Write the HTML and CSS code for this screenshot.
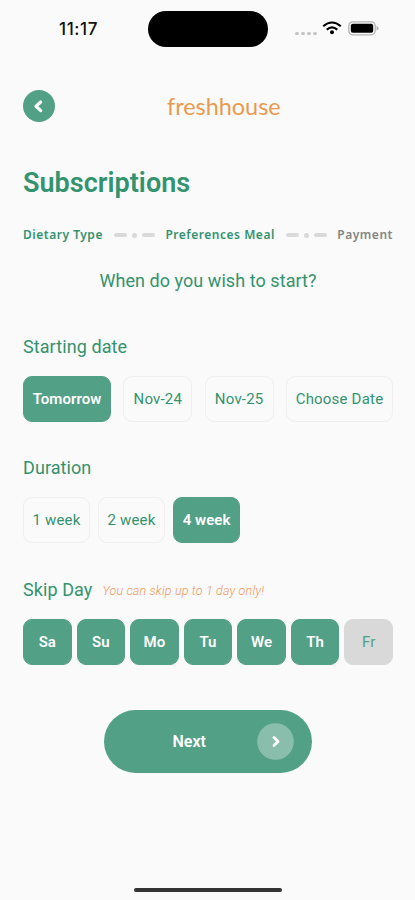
FILE: index.html
```html
<!DOCTYPE html>
<html lang="en">
<head>
<meta charset="utf-8">
<title>Subscriptions</title>
<link rel="stylesheet" href="styles.css">
</head>
<body>
<main class="screen">
  <div class="status">
    <span class="time">11:17</span>
    <span class="island"></span>
    <span class="signal"><i></i><i></i><i></i><i></i></span>
    <svg class="wifi" width="20" height="14" viewBox="0 0 20 14" fill="none" stroke="#000" stroke-width="2.1">
      <path d="M1.200 5.200Q10 -2.200 18.800 5.200M4.700 8.600Q10 4.100 15.300 8.600"/>
      <circle cx="10" cy="11.300" r="2" fill="#000" stroke="none"/>
    </svg>
    <svg class="battery" width="31" height="15" viewBox="0 0 31 15">
      <rect x=".8" y=".8" width="26.4" height="13" rx="4" fill="none" stroke="#b4b4b4" stroke-width="1.3"/>
      <rect x="2.8" y="2.8" width="22.4" height="9" rx="2" fill="#000"/>
      <path d="M28.500 5Q30.500 5.500 30.500 7.300T28.500 9.600Z" fill="#b4b4b4"/>
    </svg>
  </div>

  <header class="header">
    <button class="back" aria-label="Back">
      <svg width="32" height="32" viewBox="0 0 32 32" fill="none" stroke="#fff" stroke-width="3.2" stroke-linecap="round" stroke-linejoin="round"><path d="M17.700 12L13 16.300L17.700 20.600"/></svg>
    </button>
    <span class="logo">freshhouse</span>
  </header>

  <h1 class="title">Subscriptions</h1>

  <div class="steps">
    <span class="step diet">Dietary Type</span>
    <span class="link"><i></i><b></b><i></i></span>
    <span class="step pref">Preferences Meal</span>
    <span class="link"><i></i><b></b><i></i></span>
    <span class="step pay">Payment</span>
  </div>

  <p class="question">When do you wish to start?</p>

  <h2 class="label">Starting date</h2>
  <div class="dates">
    <button class="chip on">Tomorrow</button>
    <button class="chip">Nov-24</button>
    <button class="chip">Nov-25</button>
    <button class="chip">Choose Date</button>
  </div>

  <h2 class="label">Duration</h2>
  <div class="weeks">
    <button class="chip">1 week</button>
    <button class="chip">2 week</button>
    <button class="chip on">4 week</button>
  </div>

  <div class="skip">
    <h2 class="label">Skip Day</h2>
    <span class="hint">You can skip up to 1 day only!</span>
  </div>
  <div class="days">
    <button class="chip on">Sa</button>
    <button class="chip on">Su</button>
    <button class="chip on">Mo</button>
    <button class="chip on">Tu</button>
    <button class="chip on">We</button>
    <button class="chip on">Th</button>
    <button class="chip off">Fr</button>
  </div>

  <button class="next">
    <span class="next-text">Next</span>
    <svg width="37" height="37" viewBox="0 0 37 37" fill="none"><circle cx="18.500" cy="18.500" r="18.300" fill="#fff" fill-opacity=".32"/><path d="M17 14.500L21 18.500L17 22.500" stroke="#fff" stroke-width="2.800" stroke-linecap="round" stroke-linejoin="round"/></svg>
  </button>

  <div class="home"></div>
</main>
</body>
</html>
```

FILE: styles.css
```css
* { box-sizing: border-box; }
body { margin: 0; background: #fafafa; }
button { font: inherit; color: inherit; border: 0; padding: 0; background: none; }
.screen {
  width: 415px;
  height: 900px;
  padding: 0 22px 0 23px;
  display: flex;
  flex-direction: column;
  overflow: hidden;
  font-family: Roboto, "Liberation Sans", sans-serif;
  color: #33936f;
}
.status { display: flex; align-items: center; height: 58px; color: #111; }
.time {
  width: 88px;
  margin-left: 36px;
  font: 500 17px/20px Inter, sans-serif;
  letter-spacing: .6px;
}
.island { width: 120px; height: 35.500px; margin-left: 1px; border-radius: 18px; background: #000; }
.signal { display: flex; gap: 2.500px; margin: 9px 0 0 27px; }
.signal i { width: 3.500px; height: 3.500px; border-radius: 50%; background: #c4c4c4; }
.wifi { margin: -2px 0 0 5px; flex: none; }
.battery { margin: -1px 0 0 6px; flex: none; }
.header { display: flex; align-items: center; height: 32px; margin-top: 32px; }
.back { width: 32px; height: 32px; border-radius: 50%; background: #52a086; }
.back svg { display: block; }
.logo {
  margin-left: 112px;
  font: 400 23.500px/28px Lato, sans-serif;
  letter-spacing: -.05px;
  color: #e99a50;
}
.title { margin: 45px 0 0; font-size: 27px; line-height: 32px; font-weight: 600; letter-spacing: .02px; }
.steps {
  display: flex;
  justify-content: space-between;
  align-items: center;
  height: 18px;
  margin-top: 27px;
  font: 600 12px/18px "Noto Sans", sans-serif;
  letter-spacing: .52px;
  white-space: nowrap;
}
.pay { color: #858585; }
.link { display: flex; align-items: center; gap: 5px; }
.link i { width: 13px; height: 4px; border-radius: 2px; background: #d9d9d9; }
.link b { width: 5px; height: 5px; border-radius: 50%; background: #d9d9d9; }
.question { margin: 25px 0 0; text-align: center; font-size: 18px; line-height: 24px; letter-spacing: .06px; }
.label { margin: 0; font-size: 18px; line-height: 24px; font-weight: 400; letter-spacing: .08px; }
.question + .label { margin-top: 42px; }
.dates { display: grid; grid-template-columns: 88px 69px 69px 107px; justify-content: space-between; margin: 17px 0 34px; }
.weeks { display: grid; grid-template-columns: repeat(3, 67px); gap: 8px; margin: 17px 0 35px; }
.days { display: grid; grid-template-columns: repeat(7, 1fr); gap: 5px; margin-top: 17px; }
.chip {
  height: 46px;
  border: 1px solid #efefef;
  border-radius: 9px;
  font-size: 15px;
  letter-spacing: .2px;
  white-space: nowrap;
}
.chip.on { border-color: #52a086; background: #52a086; color: #fff; font-weight: 600; letter-spacing: .05px; }
.chip.off { border-color: #d9d9d9; background: #d9d9d9; color: #52a086; }
.skip { display: flex; align-items: center; gap: 10px; }
.hint { font-size: 12.500px; letter-spacing: .17px; font-style: italic; font-weight: 300; color: #ee965c; white-space: nowrap; }
.next {
  display: flex;
  align-items: center;
  justify-content: space-between;
  align-self: center;
  width: 208px;
  height: 63px;
  margin-top: 45px;
  padding: 0 18px 0 68.500px;
  border-radius: 32px;
  background: #52a086;
  color: #fff;
  font-size: 16px;
  font-weight: 600;
}
.home { width: 148px; height: 4px; margin: auto 0 8px 111px; border-radius: 2px; background: #333; }
```
